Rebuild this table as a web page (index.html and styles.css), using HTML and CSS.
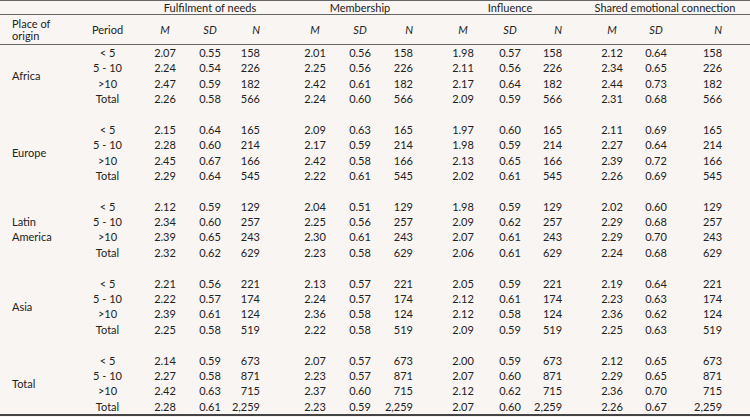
FILE: index.html
```html
<!DOCTYPE html>
<html>
<head>
<meta charset="utf-8">
<link rel="stylesheet" href="styles.css">
</head>
<body>
<table class="tbl">
  <colgroup>
    <col class="w-place"><col class="w-period">
    <col class="w-m1"><col class="w-sd1"><col class="w-n1">
    <col class="w-m2"><col class="w-sd2"><col class="w-n2">
    <col class="w-m3"><col class="w-sd3"><col class="w-n3">
    <col class="w-m4"><col class="w-sd4"><col class="w-n4">
  </colgroup>
  <thead>
    <tr class="hr1">
      <th></th><th></th>
      <th colspan="3" class="grp">Fulfilment of needs</th>
      <th colspan="3" class="grp">Membership</th>
      <th colspan="3" class="grp">Influence</th>
      <th colspan="3" class="grp">Shared emotional connection</th>
    </tr>
    <tr class="hr2">
      <th class="place">Place of<br>origin</th>
      <th class="c">Period</th>
      <th class="c i">M</th><th class="c i">SD</th><th class="r i n1">N</th>
      <th class="c i">M</th><th class="c i">SD</th><th class="r i n2">N</th>
      <th class="c i">M</th><th class="c i">SD</th><th class="r i n3">N</th>
      <th class="c i">M</th><th class="c i">SD</th><th class="r i n4">N</th>
    </tr>
  </thead>
  <tbody>
    <tr><td class="place" rowspan="4">Africa</td><td class="c">&lt; 5</td><td class="c">2.07</td><td class="c">0.55</td><td class="r n1">158</td><td class="c">2.01</td><td class="c">0.56</td><td class="r n2">158</td><td class="c">1.98</td><td class="c">0.57</td><td class="r n3">158</td><td class="c">2.12</td><td class="c">0.64</td><td class="r n4">158</td></tr>
    <tr><td class="c">5 - 10</td><td class="c">2.24</td><td class="c">0.54</td><td class="r n1">226</td><td class="c">2.25</td><td class="c">0.56</td><td class="r n2">226</td><td class="c">2.11</td><td class="c">0.56</td><td class="r n3">226</td><td class="c">2.34</td><td class="c">0.65</td><td class="r n4">226</td></tr>
    <tr><td class="c">&gt;10</td><td class="c">2.47</td><td class="c">0.59</td><td class="r n1">182</td><td class="c">2.42</td><td class="c">0.61</td><td class="r n2">182</td><td class="c">2.17</td><td class="c">0.64</td><td class="r n3">182</td><td class="c">2.44</td><td class="c">0.73</td><td class="r n4">182</td></tr>
    <tr><td class="c">Total</td><td class="c">2.26</td><td class="c">0.58</td><td class="r n1">566</td><td class="c">2.24</td><td class="c">0.60</td><td class="r n2">566</td><td class="c">2.09</td><td class="c">0.59</td><td class="r n3">566</td><td class="c">2.31</td><td class="c">0.68</td><td class="r n4">566</td></tr>
    <tr class="gap"><td colspan="14"></td></tr>

    <tr><td class="place" rowspan="4">Europe</td><td class="c">&lt; 5</td><td class="c">2.15</td><td class="c">0.64</td><td class="r n1">165</td><td class="c">2.09</td><td class="c">0.63</td><td class="r n2">165</td><td class="c">1.97</td><td class="c">0.60</td><td class="r n3">165</td><td class="c">2.11</td><td class="c">0.69</td><td class="r n4">165</td></tr>
    <tr><td class="c">5 - 10</td><td class="c">2.28</td><td class="c">0.60</td><td class="r n1">214</td><td class="c">2.17</td><td class="c">0.59</td><td class="r n2">214</td><td class="c">1.98</td><td class="c">0.59</td><td class="r n3">214</td><td class="c">2.27</td><td class="c">0.64</td><td class="r n4">214</td></tr>
    <tr><td class="c">&gt;10</td><td class="c">2.45</td><td class="c">0.67</td><td class="r n1">166</td><td class="c">2.42</td><td class="c">0.58</td><td class="r n2">166</td><td class="c">2.13</td><td class="c">0.65</td><td class="r n3">166</td><td class="c">2.39</td><td class="c">0.72</td><td class="r n4">166</td></tr>
    <tr><td class="c">Total</td><td class="c">2.29</td><td class="c">0.64</td><td class="r n1">545</td><td class="c">2.22</td><td class="c">0.61</td><td class="r n2">545</td><td class="c">2.02</td><td class="c">0.61</td><td class="r n3">545</td><td class="c">2.26</td><td class="c">0.69</td><td class="r n4">545</td></tr>
    <tr class="gap"><td colspan="14"></td></tr>

    <tr><td class="place" rowspan="4">Latin<br>America</td><td class="c">&lt; 5</td><td class="c">2.12</td><td class="c">0.59</td><td class="r n1">129</td><td class="c">2.04</td><td class="c">0.51</td><td class="r n2">129</td><td class="c">1.98</td><td class="c">0.59</td><td class="r n3">129</td><td class="c">2.02</td><td class="c">0.60</td><td class="r n4">129</td></tr>
    <tr><td class="c">5 - 10</td><td class="c">2.34</td><td class="c">0.60</td><td class="r n1">257</td><td class="c">2.25</td><td class="c">0.56</td><td class="r n2">257</td><td class="c">2.09</td><td class="c">0.62</td><td class="r n3">257</td><td class="c">2.29</td><td class="c">0.68</td><td class="r n4">257</td></tr>
    <tr><td class="c">&gt;10</td><td class="c">2.39</td><td class="c">0.65</td><td class="r n1">243</td><td class="c">2.30</td><td class="c">0.61</td><td class="r n2">243</td><td class="c">2.07</td><td class="c">0.61</td><td class="r n3">243</td><td class="c">2.29</td><td class="c">0.70</td><td class="r n4">243</td></tr>
    <tr><td class="c">Total</td><td class="c">2.32</td><td class="c">0.62</td><td class="r n1">629</td><td class="c">2.23</td><td class="c">0.58</td><td class="r n2">629</td><td class="c">2.06</td><td class="c">0.61</td><td class="r n3">629</td><td class="c">2.24</td><td class="c">0.68</td><td class="r n4">629</td></tr>
    <tr class="gap"><td colspan="14"></td></tr>

    <tr><td class="place" rowspan="4">Asia</td><td class="c">&lt; 5</td><td class="c">2.21</td><td class="c">0.56</td><td class="r n1">221</td><td class="c">2.13</td><td class="c">0.57</td><td class="r n2">221</td><td class="c">2.05</td><td class="c">0.59</td><td class="r n3">221</td><td class="c">2.19</td><td class="c">0.64</td><td class="r n4">221</td></tr>
    <tr><td class="c">5 - 10</td><td class="c">2.22</td><td class="c">0.57</td><td class="r n1">174</td><td class="c">2.24</td><td class="c">0.57</td><td class="r n2">174</td><td class="c">2.12</td><td class="c">0.61</td><td class="r n3">174</td><td class="c">2.23</td><td class="c">0.63</td><td class="r n4">174</td></tr>
    <tr><td class="c">&gt;10</td><td class="c">2.39</td><td class="c">0.61</td><td class="r n1">124</td><td class="c">2.36</td><td class="c">0.58</td><td class="r n2">124</td><td class="c">2.12</td><td class="c">0.58</td><td class="r n3">124</td><td class="c">2.36</td><td class="c">0.62</td><td class="r n4">124</td></tr>
    <tr><td class="c">Total</td><td class="c">2.25</td><td class="c">0.58</td><td class="r n1">519</td><td class="c">2.22</td><td class="c">0.58</td><td class="r n2">519</td><td class="c">2.09</td><td class="c">0.59</td><td class="r n3">519</td><td class="c">2.25</td><td class="c">0.63</td><td class="r n4">519</td></tr>
    <tr class="gap"><td colspan="14"></td></tr>

    <tr><td class="place" rowspan="4">Total</td><td class="c">&lt; 5</td><td class="c">2.14</td><td class="c">0.59</td><td class="r n1">673</td><td class="c">2.07</td><td class="c">0.57</td><td class="r n2">673</td><td class="c">2.00</td><td class="c">0.59</td><td class="r n3">673</td><td class="c">2.12</td><td class="c">0.65</td><td class="r n4">673</td></tr>
    <tr><td class="c">5 - 10</td><td class="c">2.27</td><td class="c">0.58</td><td class="r n1">871</td><td class="c">2.23</td><td class="c">0.57</td><td class="r n2">871</td><td class="c">2.07</td><td class="c">0.60</td><td class="r n3">871</td><td class="c">2.29</td><td class="c">0.65</td><td class="r n4">871</td></tr>
    <tr><td class="c">&gt;10</td><td class="c">2.42</td><td class="c">0.63</td><td class="r n1">715</td><td class="c">2.37</td><td class="c">0.60</td><td class="r n2">715</td><td class="c">2.12</td><td class="c">0.62</td><td class="r n3">715</td><td class="c">2.36</td><td class="c">0.70</td><td class="r n4">715</td></tr>
    <tr class="last"><td class="c">Total</td><td class="c">2.28</td><td class="c">0.61</td><td class="r n1">2,259</td><td class="c">2.23</td><td class="c">0.59</td><td class="r n2">2,259</td><td class="c">2.07</td><td class="c">0.60</td><td class="r n3">2,259</td><td class="c">2.26</td><td class="c">0.67</td><td class="r n4">2,259</td></tr>
  </tbody>
</table>
</body>
</html>
```

FILE: styles.css
```css
html, body {
  margin: 0;
  padding: 0;
  background: #f9f5f2;
}
body {
  width: 750px;
  height: 417px;
  overflow: hidden;
  font-family: "Lato", "Noto Sans", sans-serif;
  font-size: 11px;
  color: #222;
}
.tbl {
  width: 750px;
  border-collapse: collapse;
  table-layout: fixed;
  border-top: 1px solid #666;
  border-bottom: 2px solid #444;
}
.tbl th, .tbl td {
  padding: 0;
  font-weight: normal;
  white-space: nowrap;
  overflow: visible;
}
.w-place { width: 75px; }
.w-period { width: 65px; }
.w-m1 { width: 50px; }
.w-sd1 { width: 40px; }
.w-n1 { width: 60px; }
.w-m2 { width: 50px; }
.w-sd2 { width: 40px; }
.w-n2 { width: 60px; }
.w-m3 { width: 46px; }
.w-sd3 { width: 48px; }
.w-n3 { width: 56px; }
.w-m4 { width: 44px; }
.w-sd4 { width: 44px; }
.w-n4 { width: 72px; }

.hr1 th {
  height: 13px;
  line-height: 13px;
  border-bottom: 1px solid #666;
}
.grp {
  text-align: center;
  padding-right: 10px !important;
}
.hr2 th {
  height: 29px;
  line-height: 12px;
  border-bottom: 1px solid #666;
  vertical-align: middle;
}
.place {
  text-align: left;
  padding-left: 12px !important;
  line-height: 13px;
}
td.place { vertical-align: middle; }
.c { text-align: center; }
.r { text-align: right; }
.i { font-style: italic; }
.n1 { padding-right: 30px !important; }
.n2 { padding-right: 27px !important; }
.n3 { padding-right: 28px !important; }
.n4 { padding-right: 28px !important; }

.tbl tbody tr { height: 15.4px; }
.tbl tbody td { line-height: 15px; }
.tbl tbody tr.last { height: 15px; }
.gap td { height: 15.4px; }
```
